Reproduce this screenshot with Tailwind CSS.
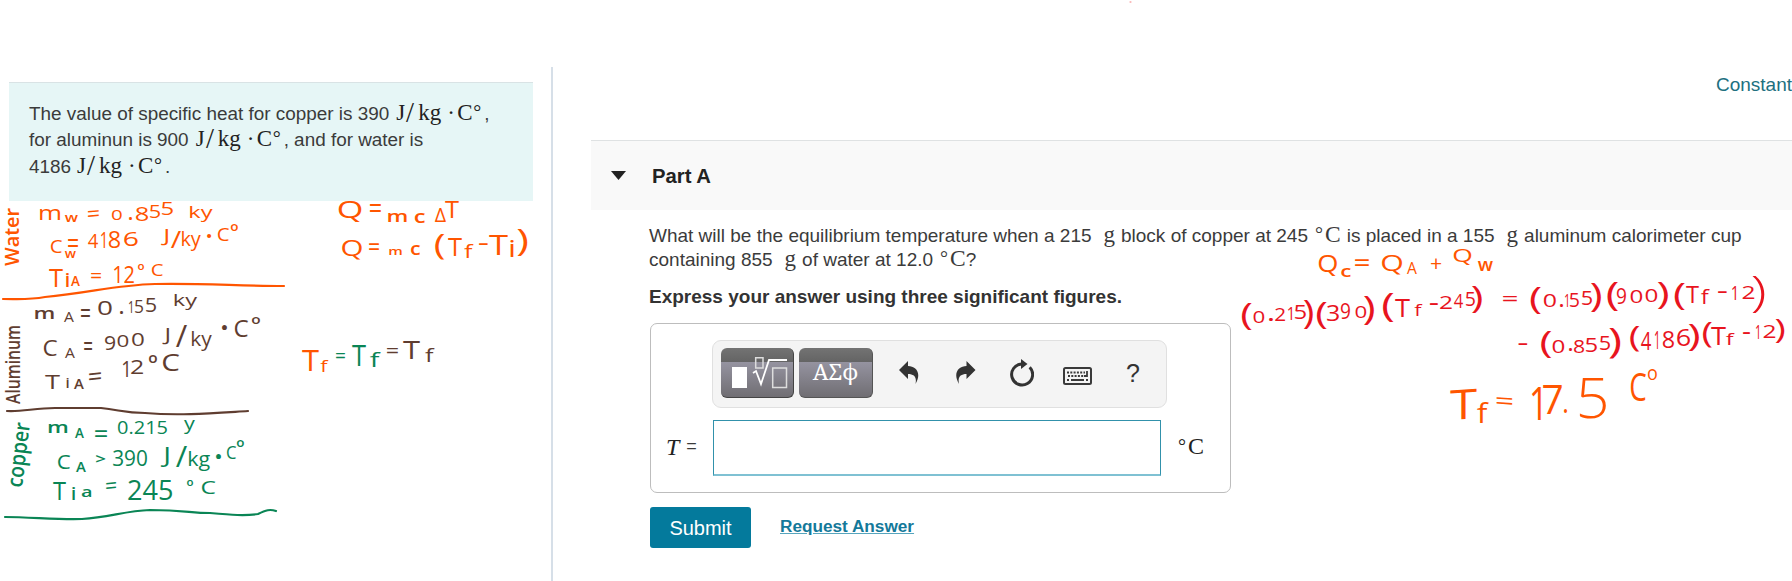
<!DOCTYPE html>
<html lang="en">
<head>
<meta charset="utf-8">
<title>Part A</title>
<script src="https://cdn.jsdelivr.net/npm/@tailwindcss/browser@4"></script>
</head>
<body class="relative h-[581px] w-[1792px] overflow-hidden bg-white font-['Liberation_Sans',Arial,sans-serif] text-[19px] text-[#3b3b3b]">
<div class="flex h-full pt-[67px]">
  <aside class="w-[553px] shrink-0 border-r-2 border-[#d6dfe8] pt-[15px] pl-[9px]">
    <div class="h-[119px] w-[524px] border-t border-[#d9e3e5] bg-[#e6f6f6] pt-[17px] pl-5 text-[18.9px] leading-[26.3px] whitespace-nowrap">
      <p class="flex h-[26.3px] items-baseline"><span>The value of specific heat for copper is 390</span><span class="ml-[7px] flex items-baseline font-['Liberation_Serif',serif] text-[23px] text-[#222]"><span class="w-[10px]">J</span><span class="w-[11px] scale-x-125 scale-y-125 pl-[1px]">/</span><span class="w-[30px] pl-[1px]">kg</span><span class="w-[10px]">·</span><span class="w-[16px]">C</span><span class="w-[11px] -translate-y-px text-[20px]">°</span></span><span>,</span></p>
      <p class="flex h-[26.3px] items-baseline"><span>for aluminun is 900</span><span class="ml-[7px] flex items-baseline font-['Liberation_Serif',serif] text-[23px] text-[#222]"><span class="w-[10px]">J</span><span class="w-[11px] scale-x-125 scale-y-125 pl-[1px]">/</span><span class="w-[30px] pl-[1px]">kg</span><span class="w-[10px]">·</span><span class="w-[16px]">C</span><span class="w-[11px] -translate-y-px text-[20px]">°</span></span><span>, and for water is</span></p>
      <p class="flex h-[26.3px] items-baseline"><span>4186</span><span class="ml-[6px] flex items-baseline font-['Liberation_Serif',serif] text-[23px] text-[#222]"><span class="w-[10px]">J</span><span class="w-[11px] scale-x-125 scale-y-125 pl-[1px]">/</span><span class="w-[30px] pl-[1px]">kg</span><span class="w-[10px]">·</span><span class="w-[16px]">C</span><span class="w-[11px] -translate-y-px text-[20px]">°</span></span><span>.</span></p>
    </div>
  </aside>
  <main class="ml-[38px] flex min-w-0 flex-1 flex-col">
    <div class="flex h-[73px] justify-end pt-[5px]"><a class="text-[19px] leading-[26px] text-[#21707f]">Constant</a></div>
    <header class="flex h-[70px] items-center border-t border-[#dfe2e3] bg-[#f9f9f9] pl-5">
      <svg class="h-[9px] w-[15px]" viewBox="0 0 15 9"><path d="M0 0H15L7.5 9Z" fill="#222"/></svg>
      <h2 class="ml-[26px] pt-px text-[20.3px] font-bold text-[#222]">Part A</h2>
    </header>
    <section class="pl-[58px] whitespace-nowrap">
      <div class="pt-[13px]">
        <p class="flex h-[23.5px] items-baseline leading-[23.5px]"><span>What will be the equilibrium temperature when a 215</span><span class="ml-[12px] font-['Liberation_Serif',serif] text-[23px]">g</span><span class="ml-[6px]">block of copper at 245</span><span class="ml-[7px] -translate-y-px font-['Liberation_Serif',serif] text-[20px]">°</span><span class="ml-[2px] font-['Liberation_Serif',serif] text-[23.5px]">C</span><span class="ml-[6px]">is placed in a 155</span><span class="ml-[12px] font-['Liberation_Serif',serif] text-[23px]">g</span><span class="ml-[6px]">aluminum calorimeter cup</span></p>
        <p class="flex h-[23.5px] items-baseline leading-[23.5px]"><span>containing 855</span><span class="ml-[12px] font-['Liberation_Serif',serif] text-[23px]">g</span><span class="ml-[6px]">of water at 12.0</span><span class="ml-[7px] -translate-y-px font-['Liberation_Serif',serif] text-[20px]">°</span><span class="ml-[2px] font-['Liberation_Serif',serif] text-[23.5px]">C</span><span>?</span></p>
      </div>
      <p class="mt-[14px] h-[26px] text-[19px] leading-[26px] font-bold text-[#333]">Express your answer using three significant figures.</p>
      <div class="mt-[13px] ml-px h-[170px] w-[581px] rounded-[7px] border border-[#bdbdbd] pt-4">
        <div class="ml-[61px] flex h-[68px] w-[455px] items-center rounded-[9px] border border-[#e0e0e0] bg-[#f4f4f4] pb-[2px] pl-2">
          <div class="h-[50px] w-[73px] rounded-[6px] border-r border-b border-[#444] bg-[linear-gradient(#737373_0,#646464_14px,#9593a0_14px,#706e73_100%)]">
            <svg class="h-[49px] w-[72px]" viewBox="0 0 72 49" fill="none" stroke="#fff" stroke-width="1.5"><path d="M11 19H26V40H11Z" fill="#fff" stroke="none"/><path d="M34.7 9.7H42V20H34.7Z" stroke="#ddd"/><path d="M32 25L35 23L40 36L48 12H66" stroke-width="1.8"/><path d="M51.7 20H65.5V39.5H51.7Z" stroke="#ddd"/></svg>
          </div>
          <div class="ml-[5px] flex h-[50px] w-[74px] items-center justify-center rounded-[6px] border-r border-b border-[#555] bg-[linear-gradient(#737373_0,#646464_14px,#9593a0_14px,#706e73_100%)] pb-[2px] font-['Noto_Serif','DejaVu_Serif',serif] text-[22.5px] text-white">ΑΣϕ</div>
          <svg class="ml-[26px] h-[24px] w-[21px]" viewBox="0 0 21 24" fill="#333"><path d="M0 9L9 0V5C17 5 23 12 16.500 23C18 16 15 13 9 13V18Z"/></svg>
          <svg class="ml-[35px] h-[24px] w-[21px]" viewBox="0 0 21 24" fill="#333"><path d="M20.500 9L11.500 0V5C3.500 5 -2.500 12 4 23C2.500 16 5.500 13 11.500 13V18Z"/></svg>
          <svg class="ml-[33px] h-[28px] w-[25px]" viewBox="0 0 25 28"><path d="M20.700 8.200A10.500 10.500 0 1 1 12.500 5" fill="none" stroke="#333" stroke-width="3"/><path d="M12 0L18.500 5L12 10Z" fill="#333"/></svg>
          <svg class="mt-[6px] ml-[29px] h-[18px] w-[29px]" viewBox="0 0 29 18" fill="none" stroke="#3a3a3a"><rect x="1" y="1" width="27" height="16" rx="1.500" stroke-width="2"/><path d="M4 5.500H22M5 9H22M4 13H6M23 13H25" stroke-width="2" stroke-dasharray="2 1.300"/><path d="M8 13H21M21 9H24V4" stroke-width="1.800"/></svg>
          <span class="ml-[34px] text-[25px] leading-none text-[#333]">?</span>
        </div>
        <div class="mt-[12px] flex h-[57px]">
          <div class="flex w-[62px] items-center gap-[7px] pb-[4px] pl-[15px]"><i class="font-['Liberation_Serif',serif] text-[24px] text-[#222]">T</i><span class="text-[18px]">=</span></div>
          <input class="h-[56px] w-[448px] border border-[#3191ab] border-b-[#7fc1d3] border-b-2 bg-white">
          <div class="flex items-baseline pt-[8px] pl-[17px] font-['Liberation_Serif',serif] text-[#222]"><span class="-translate-y-px text-[20px]">°</span><span class="ml-[2px] text-[24px]">C</span></div>
        </div>
      </div>
      <div class="mt-[14px] ml-px flex items-center">
        <button class="h-[41px] w-[101px] rounded-[3px] bg-[#047a9c] text-[20px] text-white">Submit</button>
        <a class="-mt-px ml-[29px] text-[17.200px] font-bold text-[#14799a] underline decoration-[#57a5bd]">Request Answer</a>
      </div>
    </section>
  </main>
</div>
<!-- Pen annotations laid over the page -->
<svg id="ink" class="pointer-events-none absolute inset-0 h-[581px] w-[1792px]" viewBox="0 0 1792 581" fill="none" stroke-width="2.200" stroke-linecap="round">
  <path d="M3 299C20 299 29 300 45 297C90 293 115 285 155 284C200 283 240 286 284 286" stroke="#ff5500"/>
  <path d="M7 411C22 412 35 408 55 408C75 408 85 408 101 408C120 410 125 413 145 413C180 416 215 413 248 411" stroke="#5f3d30"/>
  <path d="M5 517C30 517 60 520 82 519C110 517 125 511 150 510C185 510 190 513 210 513C232 515 245 516 258 514C266 510 270 509 276 511" stroke="#0a8555"/>
  <path d="M1130 2h1" stroke="#f47a7a" stroke-width="1"/>
</svg>
<script>
const O='#ff5500', B='#5f3d30', G='#0a8555', R='#e8141e';
// text, left, top, right, bottom of the written mark, colour, vertical skew in degrees
const notes=[
['m',40,209,60,220,O],['w',65,215,78,222,O],['=',88,210,99,217,O,-5],['0',110,209,124,220,O],['.',129,217,132,220,O],['8',136,206,148,221,O],['5',150,205,160,218,O],['5',162,202,173,215,O],['ky',190,205,213,222,O],
['C',51,239,62,253,O],['w',65,251,76,258,O],['=',68,238,78,246,O],['4',88,233,98,248,O],['1',101,232,105,248,O],['8',109,231,120,248,O],['6',124,231,138,246,O],['J',160,229,169,246,O],['/',171,231,181,248,O],['ky',182,231,201,251,O],['·',207,234,211,238,O],['C',218,227,229,241,O],['o',231,224,238,231,O],
['T',49,269,63,287,O],['i',66,272,69,287,O],['A',71,276,80,286,O],['=',91,272,101,278,O],['12',114,265,134,283,O],['o',138,264,144,270,O],['C',152,264,163,276,O],
['m',35,310,54,319,B],['A',64,311,74,322,B],['=',81,308,90,316,B],['0',98,300,112,315,B],['.',120,311,123,314,B],['1',129,301,132,313,B],['5',135,300,143,313,B],['5',146,298,156,312,B],['ky',174,293,198,310,B],
['C',44,340,57,356,B],['A',65,347,75,358,B],['=',84,341,92,349,B],['9',105,335,115,350,B],['0',117,335,129,347,B],['0',131,333,145,346,B],['J',161,328,170,344,B],['/',176,325,187,347,B],['ky',192,330,212,351,B],['·',222,325,227,330,B],['C',235,320,248,337,B],['o',252,317,260,324,B],
['T',45,374,60,389,B],['i',66,377,69,388,B],['A',74,379,84,389,B],['=',89,372,101,380,B,-6],['1',123,361,128,377,B],['2',131,359,143,374,B],['o',149,355,157,363,B],['C',163,354,179,371,B],
['m',48,424,68,433,G],['A',75,428,84,438,G],['=',95,430,107,437,G],['0.215',118,420,167,434,G],['y',184,420,195,434,G],
['C',58,454,70,469,G],['A',76,462,86,472,G],['>',95,456,106,463,G],['390',113,450,147,466,G],['J',158,448,171,467,G],['/',176,446,187,467,G],['kg',189,450,210,471,G],['·',216,454,221,459,G],['C',227,445,236,459,G],['o',237,440,244,447,G],
['T',53,482,66,500,G],['i',72,486,75,500,G],['a',79,489,94,497,G],['=',106,482,116,489,G,-5],['245',128,480,172,500,G],['o',187,480,193,486,G],['C',200,481,217,494,G],
['Q',337,200,363,222,O],['=',370,203,381,211,O],['m',388,213,407,222,O],['c',415,213,425,223,O],['Δ',435,208,446,222,O],['T',445,201,459,218,O],
['Q',342,241,362,260,O],['=',369,243,379,250,O],['m',387,249,404,255,O],['c',411,245,420,255,O],['(',434,235,446,260,O],['T',448,237,462,256,O],['f',464,244,474,258,O],['-',479,243,488,245,O],['T',489,235,508,255,O],['i',510,240,514,257,O],[')',516,229,529,256,O],
['T',302,350,319,371,O],['f',319,360,330,372,O],['=',336,352,345,358,G],['T',352,345,366,366,G],['f',370,351,381,367,G],['=',387,347,398,353,B],['T',403,340,420,359,B],['f',424,348,436,362,B],
['Q',1319,254,1337,276,O],['c',1341,268,1351,277,O],['=',1355,259,1369,266,O],['Q',1382,255,1402,275,O],['A',1407,262,1417,274,O],['+',1431,258,1441,269,O],['Q',1453,248,1472,265,O],['w',1478,261,1493,271,O],
['(',1242,303,1252,330,R],['0',1252,311,1266,323,R],['.',1269,318,1273,321,R],['2',1275,307,1285,321,R],['1',1288,307,1292,320,R],['5',1295,305,1306,319,R],[')',1304,300,1313,329,R],
['(',1316,302,1328,329,R],['3',1327,305,1339,321,R],['9',1341,303,1350,319,R],['0',1355,306,1367,318,R],[')',1364,296,1374,325,R],
['(',1380,293,1397,322,R],['T',1395,298,1410,317,R],['f',1414,304,1423,316,R],['-',1430,303,1438,305,R],['2',1440,296,1452,309,R],['4',1454,294,1463,308,R],['5',1466,291,1475,306,R],[')',1471,286,1483,313,R],
['=',1503,295,1517,301,R],['(',1530,286,1542,314,R],['0',1544,293,1556,307,R],['.',1560,304,1563,307,R],['1',1565,294,1568,307,R],['5',1570,293,1579,307,R],['5',1582,290,1592,305,R],[')',1591,283,1601,312,R],
['(',1607,282,1619,311,R],['9',1617,288,1626,304,R],['0',1630,290,1643,303,R],['0',1645,289,1658,302,R],[')',1657,281,1669,309,R],
['(',1673,282,1687,310,R],['T',1686,286,1699,303,R],['f',1701,289,1710,304,R],['-',1718,291,1727,293,R],['1',1732,286,1736,300,R],['2',1740,286,1757,299,R],[')',1752,276,1765,313,R],
['-',1517,343,1529,345,R],['(',1540,330,1553,358,R],['0',1552,340,1565,353,R],['.',1569,348,1572,351,R],['8',1574,339,1584,353,R],['5',1586,338,1597,352,R],['5',1600,336,1610,350,R],[')',1609,328,1621,358,R],
['(',1629,327,1641,352,R],['4',1641,332,1651,350,R],['1',1655,331,1658,349,R],['8',1663,330,1674,348,R],['6',1677,329,1690,346,R],[')',1688,323,1700,351,R],
['(',1703,322,1712,348,R],['T',1711,326,1726,345,R],['f',1726,332,1735,345,R],['-',1743,332,1750,334,R],['1',1756,325,1759,339,R],['2',1763,325,1776,338,R],[')',1773,319,1787,343,R],
['T',1450,388,1477,420,O,-4],['f',1477,402,1489,423,O],['=',1494,397,1515,405,O,4],['1',1532,387,1541,420,O],['7',1543,385,1562,414,O],['.',1564,409,1567,413,O],['5',1580,379,1606,419,O],['C',1631,373,1646,401,O],['o',1648,369,1657,380,O]
];
// vertical headings: text, baseline x, start y, length, size, angle, colour
const heads=[['Water',19,266,58,20,-90,O],['Aluminum',20,404,79,19,-90,B],['copper',22,488,65,22,-83,G]];
const NS='http://www.w3.org/2000/svg', ink=document.getElementById('ink');
const pen=document.createElement('canvas').getContext('2d');
function put(t,color,size,transform,len,weight){
  const e=document.createElementNS(NS,'text');
  e.textContent=t; e.setAttribute('fill',color); e.setAttribute('font-family','"Open Sans", sans-serif');
  e.setAttribute('font-size',size); e.setAttribute('font-weight',weight); e.setAttribute('transform',transform);
  if(len){e.setAttribute('textLength',len);e.setAttribute('lengthAdjust','spacingAndGlyphs');}
  ink.appendChild(e);
}
for(const [t,l,u,r,b,c,k=0] of notes){
  // keep the pen width even: tall marks use a lighter weight, small ones a heavier one
  const weight=b-u>35?300:('=-.·'.includes(t)?400:(b-u<11?600:(b-u>22?400:500)));
  pen.font=weight+' 100px "Open Sans"';
  const m=pen.measureText(t), w=m.actualBoundingBoxRight+m.actualBoundingBoxLeft, h=m.actualBoundingBoxAscent+m.actualBoundingBoxDescent;
  const rise=Math.abs(Math.tan(k*Math.PI/180))*(r-l), sy=(b-u-rise)/h, sx=Math.min((r-l)/w,sy*1.4);
  const spare=r-l-w*sx;
  put(t,c,100,`translate(${l+spare/2} ${k<0?b:b-rise}) skewY(${k}) scale(${sx} ${sy}) translate(${m.actualBoundingBoxLeft} ${-m.actualBoundingBoxDescent})`,0,weight);
}
for(const [t,x,y,len,s,a,c] of heads) put(t,c,s,`translate(${x} ${y}) rotate(${a})`,len,600);
</script>
</body>
</html>
